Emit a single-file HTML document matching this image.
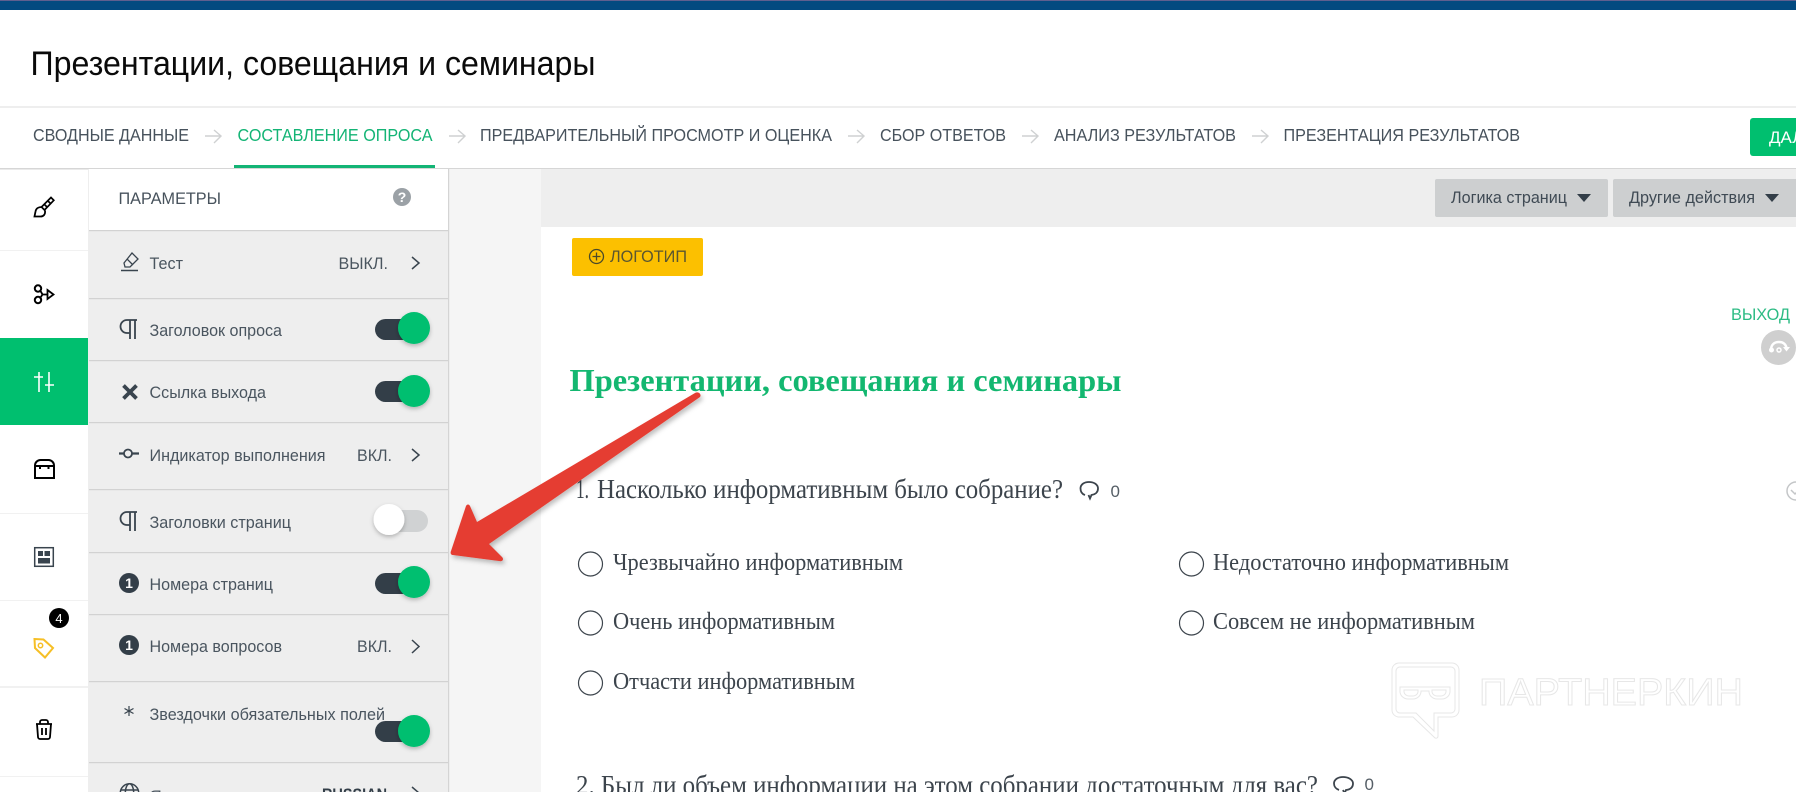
<!DOCTYPE html>
<html lang="ru"><head><meta charset="utf-8"><title>Презентации, совещания и семинары</title>
<style>
html,body{margin:0;padding:0;width:1796px;height:792px;overflow:hidden;background:#fff}
svg{display:block;position:absolute;left:0;top:0}
.s{font-family:"Liberation Sans",sans-serif}
.f{font-family:"Liberation Serif",serif}
.n{font-size:17.500px;fill:#47525c}
.p{font-size:17px;fill:#4a555f}
.o{font-size:24px;fill:#3c444c}
.q{font-size:27px;fill:#3c444c}
</style></head><body>
<svg width="1796" height="792" viewBox="0 0 1796 792" xmlns="http://www.w3.org/2000/svg">
<defs><filter id="sh" x="-40%" y="-40%" width="180%" height="180%"><feDropShadow dx="0" dy="2" stdDeviation="2" flood-color="#000" flood-opacity=".25"/></filter>
<filter id="ash" x="-10%" y="-10%" width="120%" height="120%"><feDropShadow dx="2" dy="3" stdDeviation="2.500" flood-color="#000" flood-opacity=".25"/></filter></defs>
<rect width="1796" height="792" fill="#fff"/>
<rect width="1796" height="10" fill="#034a80"/><rect width="1796" height="1" fill="#5f5f8f"/>

<text class="s" x="30.500" y="75" font-size="34" fill="#0a0a0a" textLength="565" lengthAdjust="spacingAndGlyphs">Презентации, совещания и семинары</text>
<rect y="106" width="1796" height="2" fill="#eeeeee"/>

<!-- nav -->
<g class="s">
<text class="n s" x="33" y="141" textLength="156" lengthAdjust="spacingAndGlyphs">СВОДНЫЕ ДАННЫЕ</text>
<text class="n s" x="237.500" y="141" style="fill:#13b475" textLength="195" lengthAdjust="spacingAndGlyphs">СОСТАВЛЕНИЕ ОПРОСА</text>
<text class="n s" x="480" y="141" textLength="352" lengthAdjust="spacingAndGlyphs">ПРЕДВАРИТЕЛЬНЫЙ ПРОСМОТР И ОЦЕНКА</text>
<text class="n s" x="880" y="141" textLength="126" lengthAdjust="spacingAndGlyphs">СБОР ОТВЕТОВ</text>
<text class="n s" x="1054" y="141" textLength="182" lengthAdjust="spacingAndGlyphs">АНАЛИЗ РЕЗУЛЬТАТОВ</text>
<text class="n s" x="1283.500" y="141" textLength="236.500" lengthAdjust="spacingAndGlyphs">ПРЕЗЕНТАЦИЯ РЕЗУЛЬТАТОВ</text>
</g>
<g fill="none" stroke="#cfd1d2" stroke-width="1.400">
<path d="M205 136h16M214 130l7 6-7 7"/><path d="M449 136h16M458 130l7 6-7 7"/><path d="M848 136h16M857 130l7 6-7 7"/><path d="M1022 136h16M1031 130l7 6-7 7"/><path d="M1252 136h16M1261 130l7 6-7 7"/>
</g>
<rect x="1750" y="118" width="60" height="38" rx="3" fill="#00bf6f"/>
<text class="s" x="1769" y="143" font-size="17" fill="#fff">ДАЛЕЕ</text>
<rect x="234" y="165" width="201" height="3" fill="#13b475"/>
<rect y="168" width="1796" height="1.500" fill="#d6d6d6"/>

<!-- background columns -->
<rect x="449" y="169" width="92" height="623" fill="#f5f5f5"/>
<rect x="541" y="169" width="1255" height="58" fill="#eeeeee"/>
<rect x="89" y="231" width="359" height="561" fill="#eeeeee"/>
<rect x="448" y="169" width="1.200" height="623" fill="#d4d4d4"/>
<rect x="88" y="169" width="1" height="623" fill="#eeeeee"/>

<!-- toolbar buttons -->
<rect x="1435" y="179" width="173" height="38" rx="2" fill="#cdcfd0"/>
<rect x="1613" y="179" width="190" height="38" rx="2" fill="#cdcfd0"/>
<text class="s" x="1451" y="203" font-size="17" fill="#3f4a54" textLength="116" lengthAdjust="spacingAndGlyphs">Логика страниц</text>
<text class="s" x="1629" y="203" font-size="17" fill="#3f4a54" textLength="126" lengthAdjust="spacingAndGlyphs">Другие действия</text>
<path d="M1577 194h14l-7 8z" fill="#333e48"/><path d="M1765 194h14l-7 8z" fill="#333e48"/>

<!-- sidebar -->
<rect y="338" width="88" height="87" fill="#00bf6f"/>
<g fill="#f1f1f1"><rect y="250" width="88" height="1"/><rect y="513" width="88" height="1"/><rect y="600" width="88" height="1"/><rect y="686" width="88" height="2"/><rect y="776" width="88" height="1"/></g>
<g fill="none" stroke="#000" stroke-width="2">
<path d="M51 197.500l2.800 2.800-9.300 9.700-3-3zM48 201l3 3M44.500 204.500l3 3" stroke-width="1.700"/><path d="M41.500 207c-3 0-5.500 1.500-6 4.500l-1 5h6c3 0 5-2 4.500-6" stroke-width="1.800"/>
<circle cx="38" cy="288.500" r="3.200"/><circle cx="38" cy="300" r="3.200"/><path d="M40.500 291l2 3.500h4.500M42.500 294.500l-2 3" stroke-width="1.800"/><path d="M47.500 290l6 4.500-6 4.500z" stroke-width="1.800"/>
<path d="M35 478V465.500a5.500 5.500 0 015.500-5.500h8a5.500 5.500 0 015.500 5.500V478zM35 466h19M40 466v3M48.500 466v3"/>
<path d="M36 724h16M40 724v-2a2 2 0 012-2h4a2 2 0 012 2v2M37 724l1 13a2 2 0 002 2h8a2 2 0 002-2l1-13M42 728v7M46 728v7" stroke-width="1.800"/>
</g>
<g fill="none" stroke="#fff" stroke-width="1.600"><path d="M39 372v20M34 377h9M49 372v20M45 385h9"/></g>
<rect x="34.700" y="547.700" width="18.600" height="18.600" fill="none" stroke="#39444e" stroke-width="1.500"/>
<g fill="#39444e"><rect x="38" y="551" width="5" height="5"/><rect x="44.500" y="551" width="5.500" height="5"/><rect x="38" y="558" width="12" height="5.500"/></g>
<path d="M34.500 639l9 .5 9.500 8.500-8 9.500-10-9.500z" fill="none" stroke="#f6bf26" stroke-width="2"/><circle cx="40.500" cy="645.500" r="2.200" fill="none" stroke="#f6bf26" stroke-width="1.500"/>
<circle cx="59" cy="618" r="10" fill="#000"/><text class="s" x="59" y="623" font-size="13" fill="#fff" text-anchor="middle">4</text>

<!-- panel -->
<rect x="89" y="169" width="359" height="61" fill="#fff"/>
<g fill="#d2d2d2"><rect x="89" y="230" width="359" height="1.200"/><rect x="89" y="298" width="359" height="1.200"/><rect x="89" y="360" width="359" height="1.200"/><rect x="89" y="422" width="359" height="1.200"/><rect x="89" y="489" width="359" height="1.200"/><rect x="89" y="552" width="359" height="1.200"/><rect x="89" y="614" width="359" height="1.200"/><rect x="89" y="681" width="359" height="1.200"/><rect x="89" y="762" width="359" height="1.200"/></g>
<text class="s" x="118.500" y="204" font-size="17" fill="#47525c" textLength="102.500" lengthAdjust="spacingAndGlyphs">ПАРАМЕТРЫ</text>
<circle cx="402" cy="197" r="9" fill="#9ba1a6"/><text class="s" x="402" y="202" font-size="14" font-weight="700" fill="#fff" text-anchor="middle">?</text>

<g>
<text class="p s" x="149.500" y="269" textLength="33.500" lengthAdjust="spacingAndGlyphs">Тест</text>
<text class="p s" x="338.500" y="269" textLength="49.500" lengthAdjust="spacingAndGlyphs">ВЫКЛ.</text>
<text class="p s" x="149.500" y="336" textLength="132.500" lengthAdjust="spacingAndGlyphs">Заголовок опроса</text>
<text class="p s" x="149.500" y="398" textLength="116.500" lengthAdjust="spacingAndGlyphs">Ссылка выхода</text>
<text class="p s" x="149.500" y="461" textLength="176" lengthAdjust="spacingAndGlyphs">Индикатор выполнения</text>
<text class="p s" x="357" y="461" textLength="35" lengthAdjust="spacingAndGlyphs">ВКЛ.</text>
<text class="p s" x="149.500" y="528" textLength="141.500" lengthAdjust="spacingAndGlyphs">Заголовки страниц</text>
<text class="p s" x="149.500" y="590" textLength="123.500" lengthAdjust="spacingAndGlyphs">Номера страниц</text>
<text class="p s" x="149.500" y="652" textLength="132.500" lengthAdjust="spacingAndGlyphs">Номера вопросов</text>
<text class="p s" x="357" y="652" textLength="35" lengthAdjust="spacingAndGlyphs">ВКЛ.</text>
<text class="p s" x="149.500" y="720" textLength="235.500" lengthAdjust="spacingAndGlyphs">Звездочки обязательных полей</text>
<text class="p s" x="149.500" y="802" textLength="100" lengthAdjust="spacingAndGlyphs">Язык опроса</text>
<text class="s" x="322" y="800" font-size="17" font-weight="700" fill="#333e48" textLength="65" lengthAdjust="spacingAndGlyphs">RUSSIAN</text>
</g>
<g fill="none" stroke="#39444e" stroke-width="1.500">
<path d="M412 257l7 6-7 6M412 449l7 6-7 6M412 640l7 6.500-7 6.500M412 787l7 6-7 6"/>
<path d="M124 263l8-10 6 6-8 8h-5zM127 259l6 6" stroke-width="1.300"/><path d="M121 270.500h17" stroke-width="1.500"/>
<path d="M137 320h-10a6.500 6.500 0 000 13h2.500M130 320v19M135 320v19" stroke-width="1.800"/>
<path d="M137 512h-10a6.500 6.500 0 000 13h2.500M130 512v19M135 512v19" stroke-width="1.800"/>
<path d="M123.500 385.500l13 13M136.500 385.500l-13 13" stroke-width="3.800"/>
<path d="M119 453.500h5M132 453.500h7" stroke-width="2.200"/><circle cx="128" cy="453.500" r="4" stroke-width="1.800"/>
<path d="M129 706v10M124.500 708.500l9 5M133.500 708.500l-9 5" stroke-width="1.200"/>
<circle cx="129.500" cy="793" r="9.200"/><ellipse cx="129.500" cy="793" rx="4.200" ry="9.200"/><path d="M120.500 790h18M120.500 796h18"/>
</g>
<g fill="#333e48"><circle cx="129" cy="583" r="10"/><circle cx="129" cy="645" r="10"/></g>
<g class="s" fill="#fff" font-size="14" font-weight="700" text-anchor="middle"><text x="129" y="588">1</text><text x="129" y="650">1</text></g>

<!-- toggles -->
<g fill="#333e48"><rect x="375" y="319" width="50" height="21" rx="10.500"/><rect x="375" y="381" width="50" height="21" rx="10.500"/><rect x="375" y="573" width="50" height="21" rx="10.500"/><rect x="375" y="721" width="50" height="21" rx="10.500"/></g>
<g fill="#00bf6f" filter="url(#sh)"><circle cx="414" cy="328" r="16"/><circle cx="414" cy="391" r="16"/><circle cx="414" cy="582" r="16"/><circle cx="414" cy="731" r="16"/></g>
<rect x="375" y="510" width="53" height="22" rx="11" fill="#d0d2d3"/>
<circle cx="389" cy="519.500" r="15.500" fill="#fff" filter="url(#sh)"/>

<!-- main content -->
<rect x="572" y="238" width="131" height="38" rx="2" fill="#fcc000"/>
<circle cx="596.500" cy="256.500" r="7" fill="none" stroke="#4a4a2a" stroke-width="1.300"/><path d="M592.500 256.500h8M596.500 252.500v8" stroke="#4a4a2a" stroke-width="1.300"/>
<text class="s" x="610" y="262" font-size="17" fill="#5a5630" textLength="77" lengthAdjust="spacingAndGlyphs">ЛОГОТИП</text>

<text class="s" x="1731" y="320" font-size="17" fill="#2cbb84" textLength="59" lengthAdjust="spacingAndGlyphs">ВЫХОД</text>
<circle cx="1778.500" cy="347.500" r="17.500" fill="#cfcfcf"/>
<path d="M1771 350c0-5 3-8 8-8s7 3 7.500 6" fill="none" stroke="#fff" stroke-width="2.500"/><path d="M1783 347h7l-3.500 4.500z" fill="#fff"/><circle cx="1771.500" cy="350" r="2.500" fill="#fff"/><circle cx="1779" cy="350" r="2" fill="none" stroke="#fff" stroke-width="1.500"/>

<text class="f" x="569.500" y="391" font-size="32" font-weight="700" fill="#13b770" textLength="552" lengthAdjust="spacingAndGlyphs">Презентации, совещания и семинары</text>

<text class="q f" x="576" y="498" textLength="13" lengthAdjust="spacingAndGlyphs">1.</text>
<text class="q f" x="597" y="498" textLength="466" lengthAdjust="spacingAndGlyphs">Насколько информативным было собрание?</text>
<path d="M1085 495c-3-1-4.500-3.500-4.500-6.500 0-4 3.500-6.500 8.500-6.500s9 2.500 9 6.500-3 6-6.500 6.500l-1.500 3.500-1.500-3.500" fill="none" stroke="#3c444c" stroke-width="1.800"/>
<text class="s" x="1110.500" y="497" font-size="17" fill="#555e66">0</text>
<path d="M1339 790c-3-1-5-3.500-5-6.500 0-4 4-6.500 9-6.500s10 2.500 10 6.500-3 6-7 6.500l-1.500 3.500-1.500-3.500" fill="none" stroke="#3c444c" stroke-width="1.800"/>
<text class="s" x="1364.500" y="790" font-size="17" fill="#555e66">0</text>
<circle cx="1796" cy="491" r="9" fill="none" stroke="#c4c6c8" stroke-width="1.500"/><path d="M1791 490l4 4 5-5" fill="none" stroke="#c4c6c8" stroke-width="1.500"/>

<g fill="#fff" stroke="#3c444c" stroke-width="1.200">
<circle cx="590.500" cy="564" r="12"/><circle cx="590.500" cy="623" r="12"/><circle cx="590.500" cy="683" r="12"/><circle cx="1191.500" cy="564" r="12"/><circle cx="1191.500" cy="623" r="12"/>
</g>
<text class="o f" x="613" y="570" textLength="290" lengthAdjust="spacingAndGlyphs">Чрезвычайно информативным</text>
<text class="o f" x="613" y="629" textLength="222" lengthAdjust="spacingAndGlyphs">Очень информативным</text>
<text class="o f" x="613" y="689" textLength="242" lengthAdjust="spacingAndGlyphs">Отчасти информативным</text>
<text class="o f" x="1213" y="570" textLength="296" lengthAdjust="spacingAndGlyphs">Недостаточно информативным</text>
<text class="o f" x="1213" y="629" textLength="262" lengthAdjust="spacingAndGlyphs">Совсем не информативным</text>
<text class="q f" x="576" y="794" textLength="742" lengthAdjust="spacingAndGlyphs">2. Был ли объем информации на этом собрании достаточным для вас?</text>

<!-- watermark -->
<g fill="none" stroke="#e7e7e7" stroke-width="1">
<path d="M1399 663h53a7 7 0 017 7v40a7 7 0 01-7 7h-14v19a2 2 0 01-3.500 1.500L1413 717h-14a7 7 0 01-7-7v-40a7 7 0 017-7z"/>
<path d="M1400 667h51a4 4 0 014 4v38a4 4 0 01-4 4h-17v18l-18-18h-16a4 4 0 01-4-4v-38a4 4 0 014-4z"/>
<path d="M1400 687h50v5a8 8 0 01-8 7h-5a8 8 0 01-8-7v-1h-8v1a8 8 0 01-8 7h-5a8 8 0 01-8-7z"/>
<path d="M1404 690h14v2a5 5 0 01-5 4h-4a5 5 0 01-5-4zM1432 690h14v2a5 5 0 01-5 4h-4a5 5 0 01-5-4z"/>
</g>
<text class="s" x="1479" y="705" font-size="38" fill="#fff" stroke="#e7e7e7" stroke-width="1" textLength="264" lengthAdjust="spacingAndGlyphs">ПАРТНЕРКИН</text>

<!-- red arrow -->
<path d="M695 393c3-2 7 1 5 4L489 544l13 13c2 2 1 5-3 4l-46-6c-2 0-3-2-2-4l15-45c1-2 3-2 4 0l7 16z" fill="#e53c30" filter="url(#ash)"/>
</svg>
</body></html>
